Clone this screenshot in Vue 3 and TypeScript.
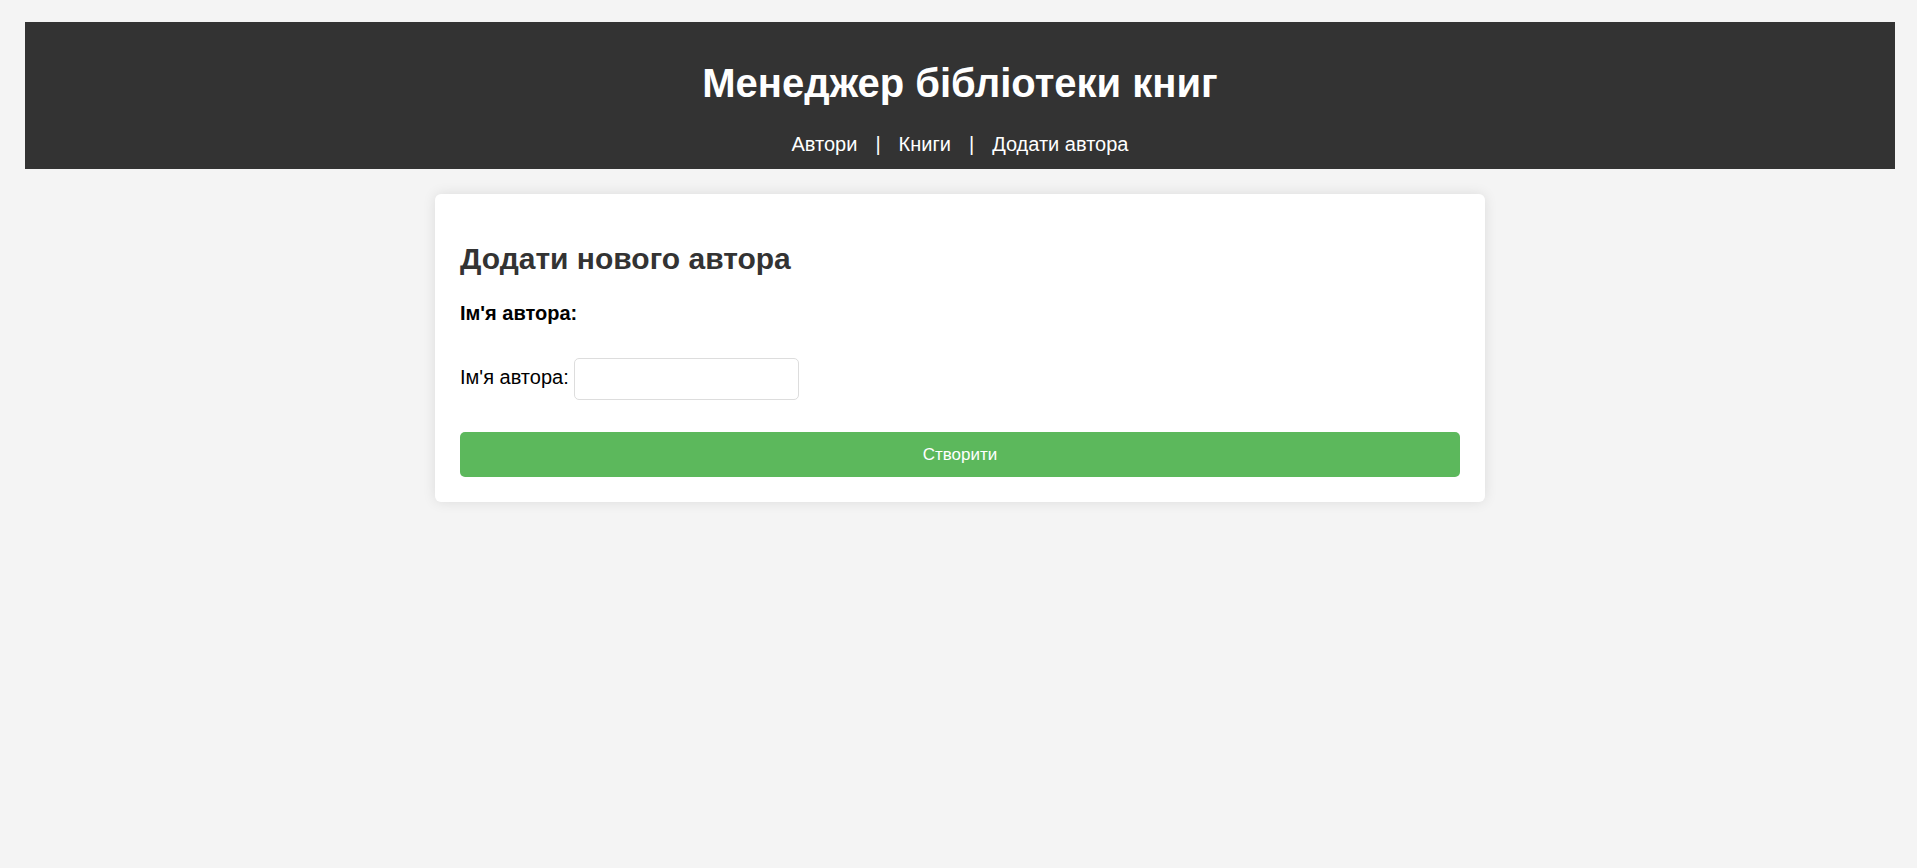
<script setup lang="ts">
import { ref } from 'vue'

interface NavLink {
  label: string
  href: string
}

const links: NavLink[] = [
  { label: 'Автори', href: '#authors' },
  { label: 'Книги', href: '#books' },
  { label: 'Додати автора', href: '#authors/new' },
]

const name = ref('')
</script>

<template>
  <header class="site-header">
    <h1>Менеджер бібліотеки книг</h1>
    <nav class="site-nav">
      <template v-for="(link, index) in links" :key="link.href">
        <span v-if="index > 0">|</span>
        <a :href="link.href">{{ link.label }}</a>
      </template>
    </nav>
  </header>

  <main class="card">
    <h2>Додати нового автора</h2>
    <form class="author-form" @submit.prevent>
      <label class="caption" for="author-name">Ім'я автора:</label>
      <p class="field">
        <label for="author-name">Ім'я автора:</label>
        <input id="author-name" v-model="name" type="text" name="name" />
      </p>
      <button type="submit">Створити</button>
    </form>
  </main>
</template>

<style>
body {
  margin: 0;
  background: #f4f4f4;
}

#app {
  padding: 22px 22px 22px 25px;
  font-family: Arial, "Liberation Sans", sans-serif;
  font-size: 20px;
  line-height: 23px;
  color: #000;
}
</style>

<style scoped>
.site-header {
  padding: 12px 12px 13px;
  background: #333;
  color: #fff;
  text-align: center;
}

h1 {
  margin: 27px 0;
  font-size: 40px;
  line-height: 45px;
}

.site-nav {
  display: flex;
  justify-content: center;
  gap: 18px;
}

.site-nav a {
  color: #fff;
  text-decoration: none;
}

.card {
  box-sizing: border-box;
  max-width: 1050px;
  margin: 25px auto;
  padding: 25px;
  background: #fff;
  border-radius: 6px;
  box-shadow: 0 0 13px rgba(0, 0, 0, 0.1);
}

h2 {
  margin: 23px 0 26px;
  font-size: 30px;
  line-height: 34px;
  color: #333;
}

.author-form {
  display: flex;
  flex-direction: column;
}

.caption {
  font-weight: bold;
}

.field {
  display: flex;
  align-items: baseline;
  gap: 5px;
  margin: 33px 0 32px;
}

input {
  box-sizing: border-box;
  width: 225px;
  height: 42px;
  padding: 10px;
  border: 1px solid #ddd;
  border-radius: 5px;
  font: inherit;
  font-size: 17px;
}

button {
  padding: 12px;
  border: 0;
  border-radius: 5px;
  background: #5cb85c;
  color: #fff;
  font: inherit;
  font-size: 17px;
  line-height: 21px;
  cursor: pointer;
}
</style>
